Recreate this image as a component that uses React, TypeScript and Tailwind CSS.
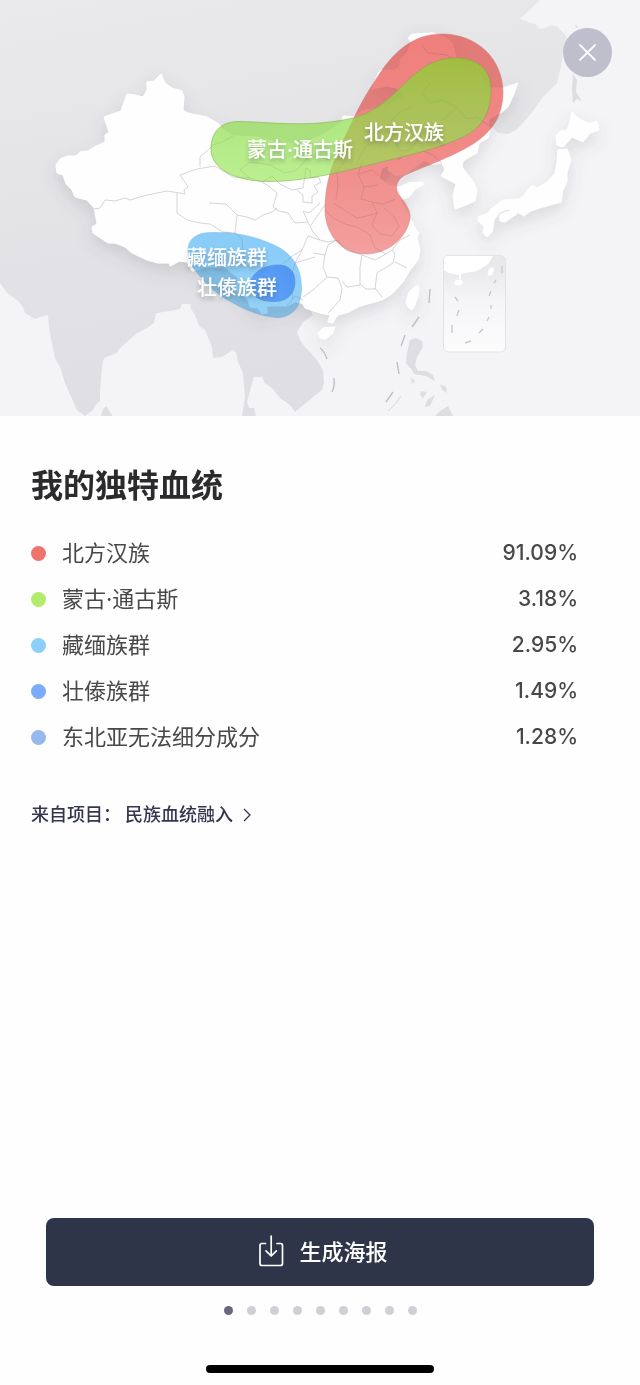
import React from "react";

const components = [
  { name: "北方汉族", share: "91.09%", dot: "bg-[#ed736e]" },
  { name: "蒙古·通古斯", share: "3.18%", dot: "bg-[#b1ec6c]" },
  { name: "藏缅族群", share: "2.95%", dot: "bg-[#8ccffa]" },
  { name: "壮傣族群", share: "1.49%", dot: "bg-[#7cabfa]" },
  { name: "东北亚无法细分成分", share: "1.28%", dot: "bg-[#97b8ec]" },
];

const slides = [1, 2, 3, 4, 5, 6, 7, 8, 9];

const ASIA =
  "M0 0H540L520 19L528 22L535 24L540 29L545 28L552 25L558 27L567 37L563 50L561 66L557 83L550 90L543 97L533 111L523 123L516 130L508 134L498 133L492 127L478 130L440 100L380 190L300 290L313 315L303 322L297 332L300 340L305 347L317 360L323 370L324 383L322 390L313 397L295 412L290 405L280 398L272 388L265 383L262 377H254L251 387L247 402L249 408H254L256 416H242L245 397L243 373L238 362L236 353L233 350L228 353L222 357L213 358L212 347L205 330L199 326L195 315L191 309L190 304H182L180 309L171 311L156 313L154 323L147 328L136 334L118 350L117 353L104 358L102 367L100 393L100 401L96 404L93 410L85 416L77 410L65 383L60 367L55 358L52 343L49 328L48 315L43 316L35 319L25 313L23 307L19 302L13 297L7 293L0 283Z";

const CHINA =
  "M56 165L60 159L68 156L76 156L80 152L88 151L94 147L105 142L105 135L109 132L104 117L121 111L127 94L135 95L143 97L147 90L147 82L154 81L161 74L165 83L172 88L182 91L184 97L183 110L188 113L207 117L219 124L222 128L233 136L255 137L280 143L303 143L323 135L333 128L342 122L343 116L353 117L362 111L387 106L404 97L397 88L387 86L372 89L378 73L381 70L395 70L400 66L400 60L408 52L411 42L408 38L412 34L433 33L446 38L452 43L456 58L463 66L480 75L487 88L503 88L518 83L513 96L508 107L502 112L498 114L490 118L488 125L490 130L488 138L479 143L477 153L463 161L462 167L473 181L477 190L475 201L466 205L455 209L453 195L456 184L447 179L441 176L445 170L442 163L432 164L424 160L407 173L402 175L395 175L388 170L390 163L400 160L407 154L398 158L391 165L382 168L379 178L390 186L400 187L408 183L422 182L424 184L415 189L409 197L400 200L405 210L413 223L415 228L419 232L417 238L420 250L418 260L410 270L403 282L392 294L382 300L360 306L349 312L338 315L335 319L333 323L328 322L330 315L320 313L305 308L302 303L295 302L287 306L267 306V313L262 314L258 308L250 307L248 300L236 290L238 278L226 268L207 267L192 271L187 262L180 261L170 266L169 263L158 263L147 260L132 253L125 247L115 243L108 243L93 233L92 227L97 224L95 212L94 208L87 200L75 197L72 190L66 184L63 175L57 173Z";

const ISLANDS = [
  "M417 285L419 287L418 296L415 305L412 310L408 307L406 302L409 292Z",
  "M323 328L335 327L333 333L326 339L320 338L318 333Z",
  "M572 112L578 118L587 123L592 123L597 121L599 130L590 133L583 142L572 137L563 147L557 145L556 136L560 131L567 130L570 122Z",
  "M558 150L567 149L571 160L567 172L567 182L563 190L561 202L543 207L531 211L524 216L519 213L507 209L500 212L494 220L492 232L487 237L483 233L484 226L478 221V217L488 213L492 208L503 200L519 199L524 195L532 185L537 188L547 182L555 173L557 164Z",
  "M500 215L506 212L515 210L517 214L512 217L505 222L500 221Z",
];

const PROVINCES =
  "M94 209L100 208L105 200L115 201L125 198L130 200L147 195L167 191L185 194L184 190L188 187L180 175L197 169L215 166L233 177L250 178L262 182L270 187L277 193L273 207L279 211L288 213L295 223L308 222L313 232L320 240L328 242L337 240M200 167L200 157L208 150L213 145L222 142L233 136M177 193L177 213L187 220L200 223L210 224L223 232L235 233L237 215L247 217L255 220L263 215L272 212L277 208M235 233L242 239L244 262L249 267L258 262L267 270M262 182L272 176L280 184L292 190L303 188L306 168L310 170V178L318 177L321 182L314 186L318 192L312 196V203L303 202V195L297 190M250 178L240 170L250 162L270 165L285 173L297 170L310 155L330 160L336 150L342 140M320 203L309 213L303 211L308 222M325 205L311 225M313 253L325 255L323 267L327 277L338 278L342 288L340 300L328 313M327 277L313 290L303 297M315 257L295 263L290 280L293 300M320 240L308 236L302 250L295 263M325 255L328 245L337 240L346 250L362 255L360 267V285L347 287L342 281M362 255L375 260L386 254M360 284L366 289H375L377 273L393 263L395 254L392 250M375 288L382 297M395 262L407 268M410 235L400 240L392 250L386 254L375 248L370 235L357 227L345 224L333 218L325 210M333 203L357 218L367 216L377 213L372 202L361 199L364 187L358 174L362 162M336 200L338 185L337 172L346 160M377 213L372 225L380 234L392 236L399 226L395 218L384 208M372 202L382 204L396 199M364 187L378 185M358 174L372 170L379 176M422 45L428 53L447 55L455 60M430 83L422 93L430 103L443 100L457 108L467 119L477 117L488 125M411 107L400 112L388 124L382 139L365 147L357 162M382 139L394 140L400 151L410 150L423 133L434 130L444 119L457 108M442 163L433 155L423 151M287 306L295 296L303 300M302 250L291 257L283 264M237 215L226 204L209 203";

const DASHES =
  "M430 289L429 303M419 317L412 327M405 335L401 346M397 362L399 374M393 392L386 402M320 348Q325 352 327 359M334 378Q335 386 332 392";

const INSET_DASHES =
  "M502 266V273M496 280L494 283M491 291L489 296M491 305V309M489 317L487 321M483 329L479 333M471 341L465 343M452 325V333M459 310L457 316M455 297L458 301";

const NORTHERN_HAN =
  "M325 207C326 170 340 148 353 120C362 100 371 87 380 73C397 48 416 34 442 34C478 34 503 60 503 92C503 118 490 133 473 144C450 158 425 166 405 175C396 180 394 189 400 196C406 204 411 211 410 219C406 240 386 254 366 254C340 254 324 232 325 207Z";

const TIBETO_BURMAN =
  "M188 250C188 238 198 232 213 232.5C235 232 258 236 280 248C293 256 301 268 301.5 286C302 305 294 317 277 317.5C256 316 236 306 217 293C206 284 200 276 194 269C190 263 188 257 188 250Z";

function AncestryMap() {
  return (
    <svg viewBox="0 0 640 416" className="block w-full" role="img">
      <defs>
        <linearGradient id="land" x1="0" y1="0" x2="0.25" y2="1">
          <stop offset="0" stopColor="#eaeaec" />
          <stop offset="0.45" stopColor="#e4e4e7" />
          <stop offset="1" stopColor="#dfdee3" />
        </linearGradient>
        <linearGradient id="red" x1="0" y1="0" x2="0" y2="1">
          <stop offset="0" stopColor="#f0807c" />
          <stop offset="0.5" stopColor="#f18a87" />
          <stop offset="1" stopColor="#f4a19f" />
        </linearGradient>
        <linearGradient id="green" x1="0" y1="0" x2="0" y2="1">
          <stop offset="0" stopColor="#94c935" stopOpacity="0.84" />
          <stop offset="0.5" stopColor="#8edc4c" stopOpacity="0.7" />
          <stop offset="1" stopColor="#95e852" stopOpacity="0.64" />
        </linearGradient>
        <linearGradient id="sky" x1="0" y1="0" x2="0" y2="1">
          <stop offset="0" stopColor="#8acdfa" />
          <stop offset="1" stopColor="#96d2f6" />
        </linearGradient>
        <linearGradient id="blue" x1="1" y1="0" x2="0" y2="1">
          <stop offset="0" stopColor="#4a8ef3" stopOpacity="0.9" />
          <stop offset="1" stopColor="#559df5" stopOpacity="0.85" />
        </linearGradient>
        <linearGradient id="inset" x1="0" y1="0" x2="0" y2="1">
          <stop offset="0.15" stopColor="#e9e9eb" />
          <stop offset="0.45" stopColor="#f5f5f7" />
          <stop offset="1" stopColor="#fcfcfd" />
        </linearGradient>
        <filter id="lift" x="-10%" y="-10%" width="120%" height="130%">
          <feDropShadow dx="0" dy="7" stdDeviation="8" floodColor="#55546a" floodOpacity="0.17" />
        </filter>
        <filter id="textShade" x="-10%" y="-20%" width="120%" height="160%">
          <feDropShadow dx="0" dy="3" stdDeviation="2" floodColor="#333a44" floodOpacity="0.36" />
        </filter>
      </defs>

      <rect width="640" height="416" fill="#f4f4f6" />
      <path d={ASIA} fill="url(#land)" />
      <g fill="#dedde2">
        <path d="M101 416L103 409L106 406L112 415V416Z" />
        <path d="M573 74L577 80L576 92L582 101L577 99L573 103L572 90Z" />
        <path d="M575 24L578 27L576 28Z" />
        <path d="M410 340L416 338L422 341L423 347L417 357L415 365L418 371L426 371L433 375L435 381L426 376L414 374L412 370L406 363L407 353Z" />
        <path d="M410 377L415 381L413 384ZM440 384L446 387L447 393L442 390ZM421 391L427 392L423 398L420 395ZM427 400L435 395L430 406L425 407ZM435 416L440 411L448 406L453 416Z" />
      </g>

      <g filter="url(#lift)" fill="#fefefe" stroke="#fefefe" strokeLinejoin="round">
        <path d={CHINA} />
        {ISLANDS.map((d) => (
          <path key={d} d={d} />
        ))}
      </g>
      <path d={PROVINCES} fill="none" stroke="#dedee2" strokeLinejoin="round" />
      <path d={DASHES} fill="none" stroke="#bfbfc8" strokeWidth="1.4" />
      <path d="M401 396Q396 405 388 411" fill="none" stroke="#d0d0d6" strokeWidth="0.8" />

      <rect x="443.5" y="255.5" width="62" height="96.5" rx="5" fill="url(#inset)" stroke="#e3e3e6" />
      <g fill="#ffffff">
        <path d="M444 270V260Q444 256 448 256H493L488 264L477 271L461 274L461 279L459 279L459 275L448 273Z" />
        <ellipse cx="458.5" cy="282.5" rx="4" ry="3" />
        <ellipse cx="491" cy="271.5" rx="2.5" ry="4.5" transform="rotate(25 491 271)" />
      </g>
      <path d={INSET_DASHES} fill="none" stroke="#c9c9d0" strokeWidth="1.4" />

      <path d={NORTHERN_HAN} fill="#ffffff" fillOpacity="0.45" />
      <path
        className="mix-blend-multiply"
        d={NORTHERN_HAN}
        fill="url(#red)"
        stroke="#d58886"
        strokeOpacity="0.5"
      />
      <path
        d="M211 149C211 131 222 121 240 121.5C270 122 310 128 353 118C387 109 402 82 423 68C434 61 444 58 456 58C478 58 491 70 491 90C491 112 482 128 463 137C440 148 410 155 385 161C345 171 305 182 267 181.5C235 181 211 169 211 149Z"
        fill="url(#green)"
        stroke="#7da63c"
        strokeOpacity="0.5"
      />
      <path d={TIBETO_BURMAN} fill="#ffffff" fillOpacity="0.35" />
      <path
        className="mix-blend-multiply"
        d={TIBETO_BURMAN}
        fill="url(#sky)"
        stroke="#7fbfe8"
        strokeOpacity="0.5"
      />
      <path
        d="M250 286C250 272 266 264 281 265C291 266 295 274 295 282C295 293 288 301 276 301.5C262 302 250 297 250 286Z"
        fill="url(#blue)"
        stroke="#3f80dd"
        strokeOpacity="0.4"
      />
      <path d={PROVINCES} fill="none" stroke="#50505f" strokeOpacity="0.06" strokeLinejoin="round" />

      <g filter="url(#textShade)" fill="#ffffff" className="text-[20px] font-medium">
        <text x="364" y="140">北方汉族</text>
        <text x="247" y="157">蒙古·通古斯</text>
        <text x="187" y="265">藏缅族群</text>
        <text x="197" y="295">壮傣族群</text>
      </g>
    </svg>
  );
}

function PosterIcon() {
  return (
    <svg
      viewBox="0 0 26 32"
      className="mb-0.5 h-8 w-[26px]"
      fill="none"
      stroke="currentColor"
      strokeWidth="1.7"
      strokeLinecap="round"
      strokeLinejoin="round"
      aria-hidden="true"
    >
      <path d="M7.5 8.5H4Q2 8.5 2 10.5V28.5Q2 30.5 4 30.5H22.5Q24.5 30.5 24.5 28.5V10.5Q24.5 8.5 22.5 8.5H19" />
      <path d="M13.2 1V20.5M8 15.8L13.2 21L18.4 15.8" />
    </svg>
  );
}

export default function App() {
  return (
    <main className="flex min-h-screen flex-col bg-[#fefefe] font-['Inter','Noto_Sans_CJK_SC',sans-serif]">
      <header className="relative">
        <AncestryMap />
        <button
          type="button"
          aria-label="关闭"
          className="absolute top-7 right-7 flex size-[49px] items-center justify-center rounded-full bg-[#b9b8c9]/90 text-white"
        >
          <svg viewBox="0 0 16 16" className="size-[17px]" stroke="currentColor" strokeWidth="1.8" strokeLinecap="round" aria-hidden="true">
            <path d="M1 1L15 15M15 1L1 15" />
          </svg>
        </button>
      </header>

      <section className="pt-[46px] pr-[62px] pl-[31px]">
        <h1 className="text-[32px] leading-12 font-bold text-[#2b2b2d]">我的独特血统</h1>
        <dl className="mt-5">
          {components.map((item) => (
            <div key={item.name} className="flex h-[46px] items-center">
              <span className={`size-[15px] shrink-0 rounded-full ${item.dot}`} />
              <dt className="ml-4 text-[22px] leading-8 text-[#48484a]">{item.name}</dt>
              <dd className="ml-auto text-[21px] leading-8 font-medium text-[#48484a]">{item.share}</dd>
            </div>
          ))}
        </dl>
        <a href="#project" className="mt-[39px] inline-flex items-center text-[18px] leading-8 font-medium text-[#34364f]">
          <span>来自项目：</span>
          <span className="ml-1">民族血统融入</span>
          <svg viewBox="0 0 8 14" className="ml-2.5 h-3.5 w-2" fill="none" stroke="currentColor" strokeWidth="1.3" aria-hidden="true">
            <path d="M1 1L7 7L1 13" />
          </svg>
        </a>
      </section>

      <footer className="mt-auto flex flex-col items-center px-[46px] pb-3">
        <button
          type="button"
          className="flex h-[68px] w-full items-center justify-center gap-[15px] rounded-lg bg-[#2f3549] pl-1.5 text-white"
        >
          <PosterIcon />
          <span className="text-[22px] leading-8 font-medium">生成海报</span>
        </button>
        <nav className="mt-5 flex gap-3.5">
          {slides.map((n) => (
            <button
              key={n}
              type="button"
              aria-label={`第${n}页`}
              className={n === 1 ? "size-[9px] rounded-full bg-[#69687f]" : "size-[9px] rounded-full bg-[#cfcfd6]"}
            />
          ))}
        </nav>
        <div className="mt-[50px] h-2 w-[228px] rounded-full bg-black" />
      </footer>
    </main>
  );
}
